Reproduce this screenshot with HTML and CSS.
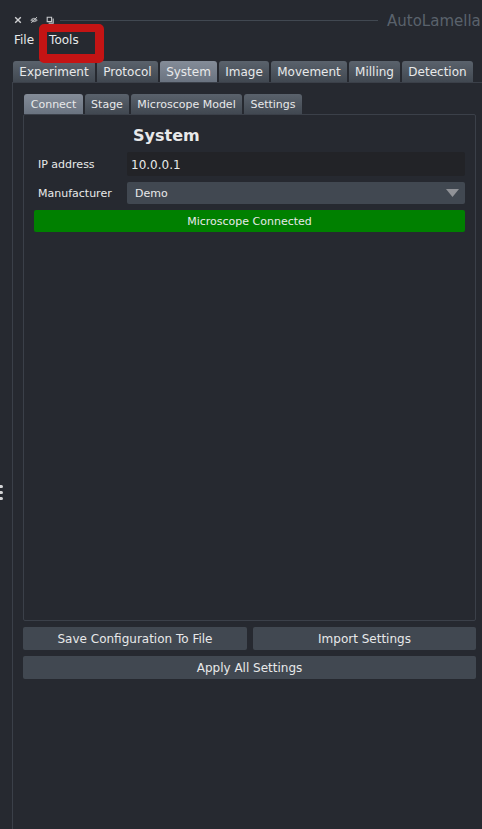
FILE: index.html
```html
<!DOCTYPE html>
<html lang="en">
<head>
<meta charset="utf-8">
<title>AutoLamella</title>
<link rel="stylesheet" href="styles.css">
</head>
<body>
<div class="window">
  <div class="handle"><i></i><i></i><i></i></div>
  <header class="titlebar">
    <svg class="ico" viewBox="0 0 8 8"><path d="M1.2 1.2 6.8 6.8M6.8 1.2 1.2 6.8" stroke="#d0d1d3" stroke-width="1.4" fill="none"/></svg>
    <svg class="ico" viewBox="0 0 8 8"><path d="M.2 4.2Q4 -.6 7.8 4.2 4 8.2.2 4.2Z" fill="#96999d"/><circle cx="4" cy="4.1" r="1" fill="#4a4d53"/><path d="M1.2 7 7 1" stroke="#c4c6c8" stroke-width=".9"/></svg>
    <svg class="ico" viewBox="0 0 8 8"><path d="M1.2 1.2H5.6V5.6H1.2ZM7.2 2.6V7.2H2.6" stroke="#c8c9cb" stroke-width="1.1" fill="none"/></svg>
    <span class="rule"></span>
    <span class="title">AutoLamella</span>
  </header>
  <nav class="menubar">
    <span>File</span>
    <span class="tools">Tools<b class="marker"></b></span>
  </nav>
  <nav class="tabs main-tabs">
    <span class="w-exp">Experiment</span><span class="w-pro">Protocol</span><span class="w-sys on">System</span><span class="w-img">Image</span><span class="w-mov">Movement</span><span class="w-mil">Milling</span><span class="w-det">Detection</span>
  </nav>
  <main class="pane">
    <nav class="tabs sub-tabs">
      <span class="w-con on">Connect</span><span class="w-stg">Stage</span><span class="w-mod">Microscope Model</span><span class="w-set">Settings</span>
    </nav>
    <section class="panel">
      <h1>System</h1>
      <div class="row ip"><label>IP address</label><div class="input">10.0.0.1</div></div>
      <div class="row"><label>Manufacturer</label><div class="select"><span>Demo</span><svg viewBox="0 0 13 8"><path d="M0 0H13L6.5 8Z" fill="#909297"/></svg></div></div>
      <div class="status">Microscope Connected</div>
    </section>
    <div class="actions">
      <button>Save Configuration To File</button>
      <button>Import Settings</button>
      <button class="wide">Apply All Settings</button>
    </div>
  </main>
</div>
</body>
</html>
```
FILE: styles.css
```css
* { box-sizing: border-box; }
body { margin: 0; background: #262930; color: #e8e9ea; font: 12px/14px "DejaVu Sans", sans-serif; }
.window { position: relative; width: 482px; height: 829px; padding: 12px 0 0 12px; display: flex; flex-direction: column; overflow: hidden; }
.handle { position: absolute; left: 0; top: 485px; display: grid; gap: 3px; }
.handle i { width: 3px; height: 3px; background: #d4d5d7; border-radius: 0 1.5px 1.5px 0; }
.titlebar { display: flex; align-items: center; height: 16px; padding-left: 2px; }
.ico { width: 8px; height: 8px; margin-right: 8px; flex: none; }
.rule { width: 318px; height: 1px; margin-left: -2px; background: #414851; flex: none; }
.title { margin-left: 9px; padding-top: 2px; font-size: 15px; line-height: 16px; color: #5a626c; white-space: nowrap; }
.menubar { display: flex; gap: 15px; height: 33px; padding: 5px 0 0 2px; }
.tools { position: relative; height: 14px; }
.marker { position: absolute; left: -10px; top: -9px; width: 65px; height: 39px; border: solid #c41414; border-width: 8px 9px 9px 8px; border-radius: 5px; }
.tabs { display: flex; gap: 2px; }
.tabs span { display: flex; align-items: center; justify-content: center; border-radius: 3px 3px 0 0; background: linear-gradient(#5a626c, #414851); white-space: nowrap; }
.tabs .on { background: linear-gradient(#848c98, #6a7380); }
.main-tabs { height: 21px; padding-left: 1px; }
.sub-tabs { height: 20px; padding-left: 1px; font-size: 11px; }
.sub-tabs span { padding-top: 2px; }
.w-exp { width: 82px; } .w-pro { width: 61px; } .w-sys { width: 57px; } .w-img { width: 50px; }
.w-mov { width: 76px; } .w-mil { width: 51px; } .w-det { width: 71px; }
.w-con { width: 59px; } .w-stg { width: 44px; } .w-mod { width: 111px; } .w-set { width: 58px; }
.pane { flex: 1; border: solid #3b4049; border-width: 1px 0 0 1px; padding: 11px 6px 0 10px; }
.panel { height: 507px; width: 453px; border: 1px solid #3b4049; border-radius: 2px; padding: 11px 10px 0; font-size: 11px; }
h1 { margin: 0; padding-left: 99px; font-size: 16px; line-height: 20px; height: 26px; }
.row { display: grid; grid-template-columns: 89px 1fr; align-items: center; height: 22px; padding-left: 4px; margin-bottom: 6px; }
.row label, .select span { padding-top: 2px; }
.ip { height: 24px; }
.input, .select { height: 100%; display: flex; align-items: center; border-radius: 2px; }
.input { background: #222327; padding: 1px 0 0 4px; font-size: 12px; }
.select { background: #414851; padding: 0 6px 0 8px; justify-content: space-between; }
.select svg { width: 13px; height: 8px; }
.status { height: 22px; line-height: 22px; padding-top: 1px; background: #008000; border-radius: 2px; text-align: center; }
.actions { width: 453px; margin-top: 6px; display: grid; grid-template-columns: 224px 223px; gap: 6px; }
button { height: 23px; padding: 0; border: 0; border-radius: 2px; background: #414851; color: inherit; font: inherit; }
.wide { grid-column: 1 / 3; }
```
